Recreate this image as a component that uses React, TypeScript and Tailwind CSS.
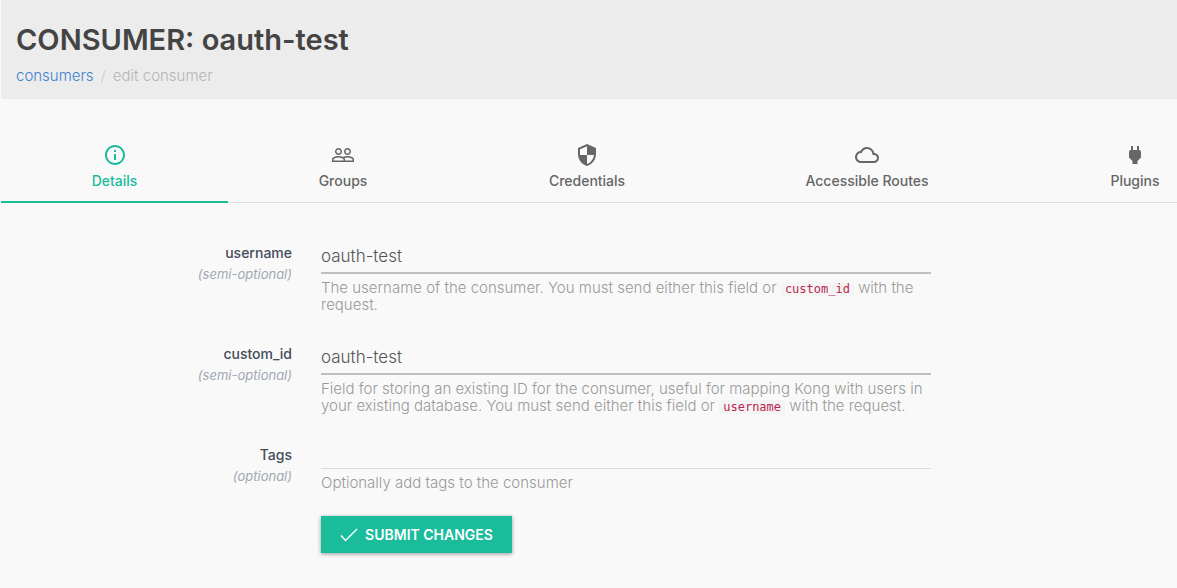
import type { ReactNode } from "react";
import {
  MdOutlineInfo,
  MdPeopleOutline,
  MdPower,
  MdSecurity,
  MdCloudQueue,
} from "react-icons/md";

const tabs = [
  { label: "Details", icon: MdOutlineInfo, width: "w-[227px]", active: true },
  { label: "Groups", icon: MdPeopleOutline, width: "w-[230px]", active: false },
  { label: "Credentials", icon: MdSecurity, width: "w-[258px]", active: false },
  { label: "Accessible Routes", icon: MdCloudQueue, width: "w-[302px]", active: false },
  { label: "Plugins", icon: MdPower, width: "w-[234px]", active: false },
];

function Code({ children }: { children: ReactNode }) {
  return (
    <code className="rounded-sm bg-[#f4f4f4] px-1 font-['DejaVu_Sans_Mono',monospace] text-[12px] leading-none text-[#b9264f]">
      {children}
    </code>
  );
}

type FieldProps = {
  id: string;
  label: string;
  note: string;
  value?: string;
  children: ReactNode;
};

function Field({ id, label, note, value, children }: FieldProps) {
  const filled = value !== undefined;
  return (
    <div className="grid grid-cols-[291px_minmax(0,1fr)] gap-x-[29px]">
      <label htmlFor={id} className="pt-[2px] text-right text-[14px] leading-[21px] font-medium text-[#444b59]">
        {label}
        <span className="block text-[13px] leading-[23px] font-normal text-[#a0a8b4] italic">{note}</span>
      </label>
      <div>
        <input
          id={id}
          type="text"
          defaultValue={value}
          className={
            filled
              ? "block h-[34px] w-full border-b-2 border-[#c0c0c0] bg-transparent text-[17px] font-light text-[#555] outline-none"
              : "block h-[27px] w-full border-b border-[#dcdcdc] bg-transparent text-[17px] font-light text-[#555] outline-none"
          }
        />
        <p className="pt-[5px] text-[15px] leading-[17px] font-light text-[#999]">{children}</p>
      </div>
    </div>
  );
}

export default function App() {
  return (
    <div className="min-h-screen overflow-hidden bg-[#f9f9f9] pl-px font-['Inter',sans-serif]">
      <header className="bg-[#ececec] px-[15px] pt-[22px] pb-[13px]">
        <h1 className="text-[29px] leading-[36px] font-semibold text-[#444]">CONSUMER: oauth-test</h1>
        <nav aria-label="Breadcrumb" className="mt-[8px] flex gap-[7px] text-[15px] leading-[20px] font-light text-[#b5b5b5]">
          <a href="#consumers" className="text-[#3b82cc]">consumers</a>
          <span className="text-[#ccc]">/</span>
          <span>edit consumer</span>
        </nav>
      </header>

      <div role="tablist" className="mt-[32px] flex overflow-hidden">
        {tabs.map(({ label, icon: Icon, width, active }) => (
          <button
            key={label}
            type="button"
            role="tab"
            aria-selected={active}
            className={`${width} flex h-[72px] shrink-0 flex-col items-center pt-[12px] text-[14px] leading-[20px] font-medium ${
              active
                ? "border-b-2 border-[#1abc9c] text-[#1abc9c]"
                : "border-b border-[#ddd] text-[#666]"
            }`}
          >
            <Icon className="mb-[4px] size-[24px]" />
            {label}
          </button>
        ))}
      </div>

      <form className="flex flex-col gap-[28px] pt-[37px] pr-[246px]" onSubmit={(e) => e.preventDefault()}>
        <Field id="username" label="username" note="(semi-optional)" value="oauth-test">
          The username of the consumer. You must send either this field or <Code>custom_id</Code> with the request.
        </Field>
        <Field id="custom_id" label="custom_id" note="(semi-optional)" value="oauth-test">
          Field for storing an existing ID for the consumer, useful for mapping Kong with users in your existing
          database. You must send either this field or <Code>username</Code> with the request.
        </Field>
        <div>
          <Field id="tags" label="Tags" note="(optional)">
            Optionally add tags to the consumer
          </Field>
          <button
            type="submit"
            className="mt-[25px] ml-[320px] flex h-[37px] w-[191px] items-center justify-center gap-[7px] bg-[#1abc9c] text-[14px] font-semibold text-white shadow-[0_1px_4px_rgba(0,0,0,0.4)]"
          >
            <svg viewBox="0 0 18 14" className="h-[14px] w-[18px]" fill="none" stroke="currentColor" strokeWidth="1.4" aria-hidden="true">
              <path d="M1 7.5 5.5 12.5 17 1" />
            </svg>
            SUBMIT CHANGES
          </button>
        </div>
      </form>
    </div>
  );
}
